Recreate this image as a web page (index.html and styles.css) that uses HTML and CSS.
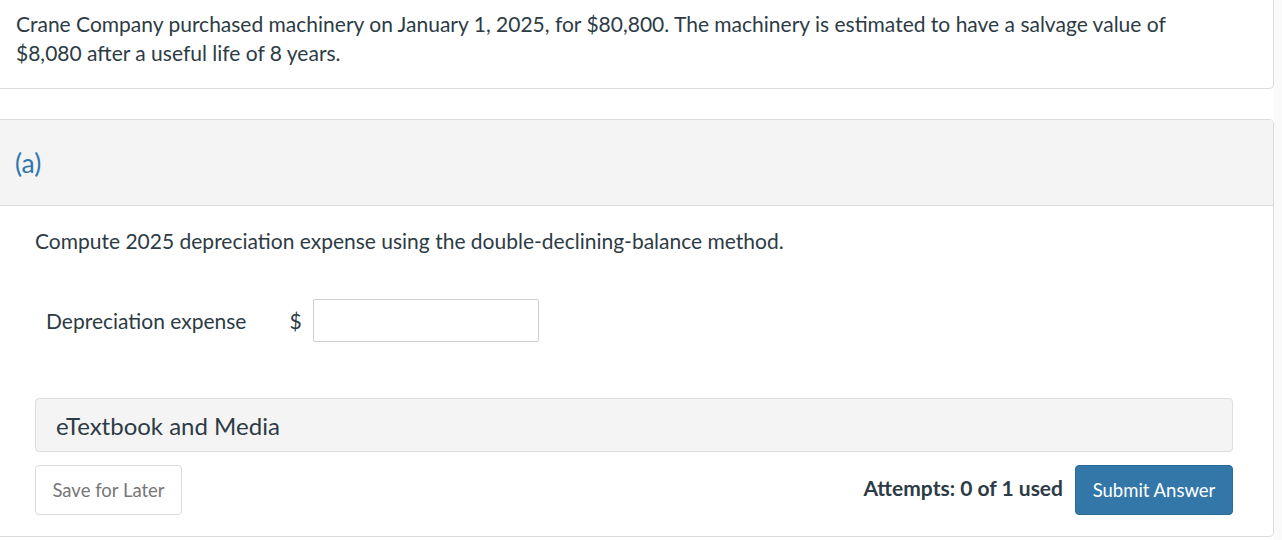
FILE: index.html
```html
<!DOCTYPE html>
<html lang="en">
<head>
<meta charset="utf-8">
<title>Question</title>
<link rel="stylesheet" href="styles.css">
</head>
<body>
<div class="wrap">
  <div class="intro">
    <p>Crane Company purchased machinery on January 1, 2025, for $80,800. The machinery is estimated to have a salvage value of $8,080 after a useful life of 8 years.</p>
  </div>
  <div class="part">
    <div class="part-head"><span class="part-label">(a)</span></div>
    <div class="part-body">
      <p class="prompt">Compute 2025 depreciation expense using the double-declining-balance method.</p>
      <div class="answer-row">
        <span class="answer-label">Depreciation expense</span>
        <span class="currency">$</span>
        <input class="answer-input" type="text" aria-label="Depreciation expense">
      </div>
      <div class="media">eTextbook and Media</div>
      <div class="actions">
        <button class="btn-save" type="button">Save for Later</button>
        <div class="actions-right">
          <span class="attempts">Attempts: 0 of 1 used</span>
          <button class="btn-submit" type="button">Submit Answer</button>
        </div>
      </div>
    </div>
  </div>
</div>
</body>
</html>
```
FILE: styles.css
```css
html, body {
  margin: 0;
  padding: 0;
  background: #fafafa;
}
body {
  font-family: Lato, "Open Sans", sans-serif;
  color: #2d3b45;
}
.wrap {
  width: 1274px;
  background: #fff;
  height: 540px;
}
.intro {
  border-right: 1px solid #dcdcdc;
  border-bottom: 1px solid #dcdcdc;
  border-radius: 0 0 5px 0;
  padding: 9px 16px 20px 16px;
  height: 59px;
}
.intro p {
  margin: 0;
  font-size: 21px;
  line-height: 29px;
  max-width: 1200px;
}
.part {
  margin-top: 30px;
  border-top: 1px solid #dcdcdc;
  border-right: 1px solid #dcdcdc;
  border-bottom: 1px solid #dcdcdc;
  border-radius: 0 5px 5px 0;
}
.part-head {
  background: #f4f4f4;
  height: 85px;
  border-bottom: 1px solid #dcdcdc;
  display: flex;
  align-items: center;
  padding-left: 15px;
  border-radius: 0 5px 0 0;
}
.part-label {
  color: #2f77ac;
  font-size: 26.5px;
}
.part-body {
  padding: 0 40px 21px 35px;
}
.prompt {
  margin: 0;
  padding-top: 23px;
  font-size: 21px;
  line-height: 24px;
}
.answer-row {
  display: flex;
  align-items: center;
  margin-top: 46px;
  padding-left: 11px;
}
.answer-label {
  font-size: 21px;
}
.currency {
  font-size: 21px;
  margin-left: 43px;
  margin-right: 11px;
}
.answer-input {
  width: 226px;
  height: 43px;
  box-sizing: border-box;
  border: 1px solid #cfcfcf;
  border-radius: 2px;
  margin: 0;
}
.media {
  margin-top: 56px;
  background: #f4f4f4;
  border: 1px solid #dddddd;
  border-radius: 4px;
  height: 52px;
  display: flex;
  align-items: center;
  padding-left: 20px;
  font-size: 24px;
}
.actions {
  display: flex;
  justify-content: space-between;
  align-items: center;
  margin-top: 13px;
}
.btn-save {
  font-family: Lato, sans-serif;
  font-size: 18.5px;
  color: #777;
  background: #fff;
  border: 1px solid #dcdcdc;
  border-radius: 4px;
  width: 147px;
  height: 50px;
  padding: 0;
}
.actions-right {
  display: flex;
  align-items: center;
  gap: 12px;
}
.attempts {
  font-weight: 700;
  font-size: 21px;
  margin-bottom: 5px;
}
.btn-submit {
  font-family: Lato, sans-serif;
  font-size: 18.5px;
  color: #fff;
  background: #3277a8;
  border: 1px solid #2b6a97;
  border-radius: 4px;
  width: 158px;
  height: 50px;
  padding: 0;
}
```
